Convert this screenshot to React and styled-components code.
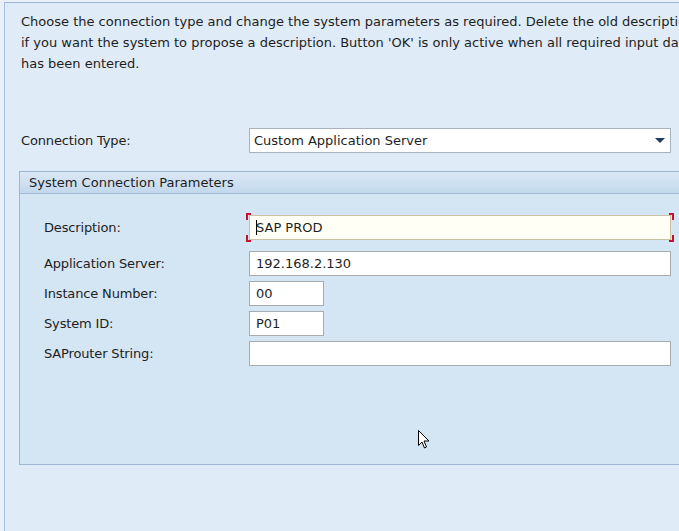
import React from 'react'
import styled, { createGlobalStyle } from 'styled-components'

const Global = createGlobalStyle`
  html, body {
    margin: 0;
    padding: 0;
    width: 679px;
    height: 531px;
    overflow: hidden;
    background: #e9f0f8;
  }
  * { box-sizing: border-box; }
`

const Frame = styled.div`
  width: 679px;
  height: 531px;
  padding: 2px 0 0 4px;
  font-family: Tahoma, "DejaVu Sans", "Liberation Sans", sans-serif;
  font-size: 13px;
  color: #1e1e1e;
`

const Panel = styled.div`
  height: 100%;
  background: #dfebf6;
  border-top: 1px solid #9fb6d3;
  border-left: 1px solid #a9bedb;
  padding: 8px 0 0 16px;
  position: relative;
`

const Intro = styled.p`
  margin: 0;
  line-height: 21px;
  white-space: nowrap;
`

const TypeRow = styled.div`
  display: grid;
  grid-template-columns: 228px 422px;
  align-items: center;
  margin-top: 54px;
`

const Label = styled.span`
  white-space: nowrap;
  letter-spacing: -0.15px;
`

const Select = styled.div`
  height: 25px;
  background: #fff;
  border: 1px solid #a9b2bc;
  display: flex;
  align-items: center;
  justify-content: space-between;
  padding: 0 5px 0 4px;
`

const Arrow = styled.span`
  width: 0;
  height: 0;
  border-left: 5px solid transparent;
  border-right: 5px solid transparent;
  border-top: 5px solid #1f3b66;
`

const Group = styled.div`
  margin: 18px 0 0 -2px;
  height: 294px;
  border: 1px solid #9fb6d3;
  border-right: none;
  background: #d4e5f4;
`

const GroupHead = styled.div`
  height: 22px;
  line-height: 21px;
  padding-left: 9px;
  background: linear-gradient(#dbe8f5, #c3d8ec);
  border-bottom: 1px solid #a3b9d5;
`

const Fields = styled.div`
  display: grid;
  grid-template-columns: 205px 422px;
  row-gap: 5px;
  padding: 21px 0 0 24px;
  align-items: center;
`

const Input = styled.div`
  height: 25px;
  width: ${p => p.$short ? '75px' : '100%'};
  margin-bottom: ${p => p.$focus ? '6px' : '0'};
  background: ${p => p.$focus ? '#fffff6' : '#fff'};
  border: 1px solid ${p => p.$focus ? '#c9c4a4' : '#a9acaf'};
  display: flex;
  align-items: center;
  padding-left: 6px;
  position: relative;
`

const Caret = styled.span`
  width: 1px;
  height: 15px;
  background: #000;
  margin-right: -1px;
`

const Corner = styled.span`
  position: absolute;
  width: 5px;
  height: 7px;
  border-color: #c8102e;
  border-style: solid;
  border-width: 0;
  ${p => p.$tl && 'top: -3px; left: -4px; border-top-width: 2px; border-left-width: 2px;'}
  ${p => p.$bl && 'bottom: -3px; left: -4px; border-bottom-width: 2px; border-left-width: 2px;'}
  ${p => p.$tr && 'top: -3px; right: -4px; border-top-width: 2px; border-right-width: 2px;'}
  ${p => p.$br && 'bottom: -3px; right: -4px; border-bottom-width: 2px; border-right-width: 2px;'}
`

const Pointer = styled.svg`
  position: absolute;
  left: 413px;
  top: 427px;
`

const fields = [
  { label: 'Application Server:', value: '192.168.2.130' },
  { label: 'Instance Number:', value: '00', short: true },
  { label: 'System ID:', value: 'P01', short: true },
  { label: 'SAProuter String:', value: '' },
]

export default function App() {
  return (
    <Frame>
      <Global />
      <Panel>
        <Intro>
          Choose the connection type and change the system parameters as required. Delete the old description<br />
          if you want the system to propose a description. Button 'OK' is only active when all required input data<br />
          has been entered.
        </Intro>
        <TypeRow>
          <Label>Connection Type:</Label>
          <Select>
            <span>Custom Application Server</span>
            <Arrow />
          </Select>
        </TypeRow>
        <Group>
          <GroupHead>System Connection Parameters</GroupHead>
          <Fields>
            <Label style={{ marginBottom: 6 }}>Description:</Label>
            <Input $focus>
              <Corner $tl /><Corner $bl /><Corner $tr /><Corner $br />
              <Caret />SAP PROD
            </Input>
            {fields.map(f => (
              <React.Fragment key={f.label}>
                <Label>{f.label}</Label>
                <Input $short={f.short}>{f.value}</Input>
              </React.Fragment>
            ))}
          </Fields>
        </Group>
        <Pointer width="12" height="19" viewBox="0 0 12 19">
          <path d="M0.5 0.5 L0.5 15.5 L4 12 L6.5 18 L8.5 17 L6 11 L11 11 Z" fill="#fff" stroke="#000" strokeWidth="1" />
        </Pointer>
      </Panel>
    </Frame>
  )
}
